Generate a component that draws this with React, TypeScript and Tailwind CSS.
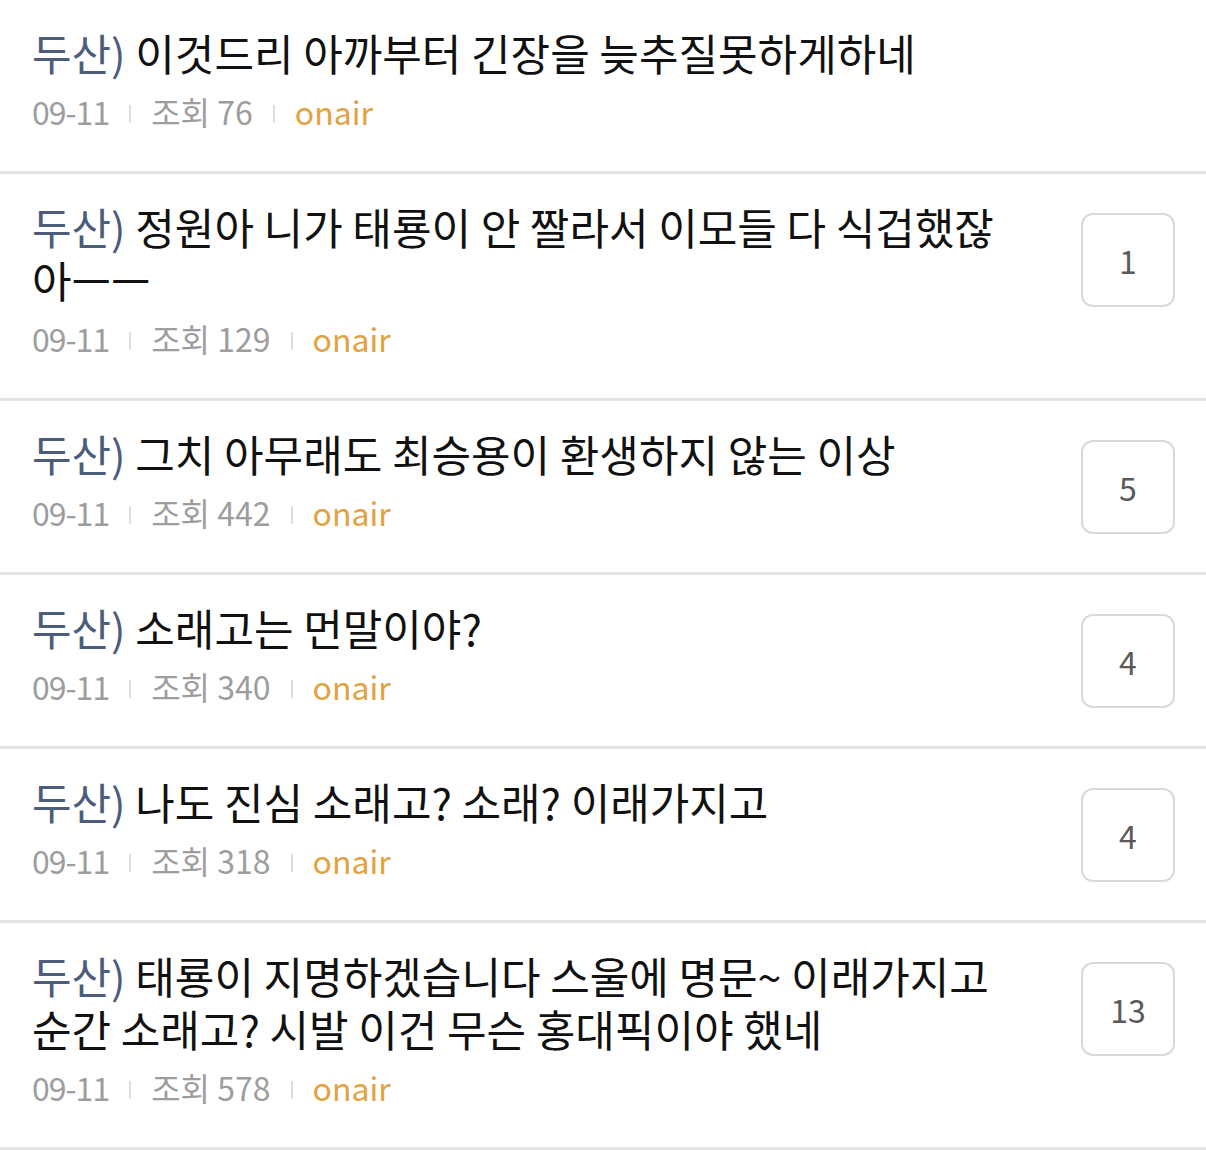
const posts = [
  { title: "이것드리 아까부터 긴장을 늦추질못하게하네", views: 76, comments: 0 },
  { title: "정원아 니가 태룡이 안 짤라서 이모들 다 식겁했잖아ㅡㅡ", views: 129, comments: 1 },
  { title: "그치 아무래도 최승용이 환생하지 않는 이상", views: 442, comments: 5 },
  { title: "소래고는 먼말이야?", views: 340, comments: 4 },
  { title: "나도 진심 소래고? 소래? 이래가지고", views: 318, comments: 4 },
  {
    title: "태룡이 지명하겠습니다 스울에 명문~ 이래가지고 순간 소래고? 시발 이건 무슨 홍대픽이야 했네",
    views: 578,
    comments: 13,
  },
];

const font = { fontFamily: '"Noto Sans CJK KR", "Noto Sans", sans-serif' };

function Divider() {
  return <span className="mx-[20px] mt-[6px] inline-block h-[18px] w-[2px] bg-[#dedede]" />;
}

export default function App() {
  return (
    <div className="min-h-[1150px] w-[1206px] bg-white" style={font}>
      {posts.map((post, index) => (
        <div key={index} className="flex border-b-[3px] border-[#e3e3e3] pl-[32px] pr-[31px] pt-[26px] pb-[40px]">
          <div className="min-w-0 flex-1 pr-[60px]">
            <p className="text-[43px] leading-[53px] text-[#111] break-all">
              <span className="text-[#4b5d7b]">두산)</span> {post.title}
            </p>
            <div className="mt-[12px] flex h-[40px] items-center text-[32px] text-[#9d9d9d]">
              <span className="tracking-[-1px]">09-11</span>
              <Divider />
              <span>조회 {post.views}</span>
              <Divider />
              <span className="text-[#e2a23f]">onair</span>
            </div>
          </div>
          {post.comments > 0 && (
            <div className="mt-[13px] -mb-[3px] flex h-[94px] w-[94px] shrink-0 items-center justify-center rounded-[12px] border-2 border-[#d9d9d9] text-[32px] text-[#5a5a5a]">
              {post.comments}
            </div>
          )}
        </div>
      ))}
    </div>
  );
}
